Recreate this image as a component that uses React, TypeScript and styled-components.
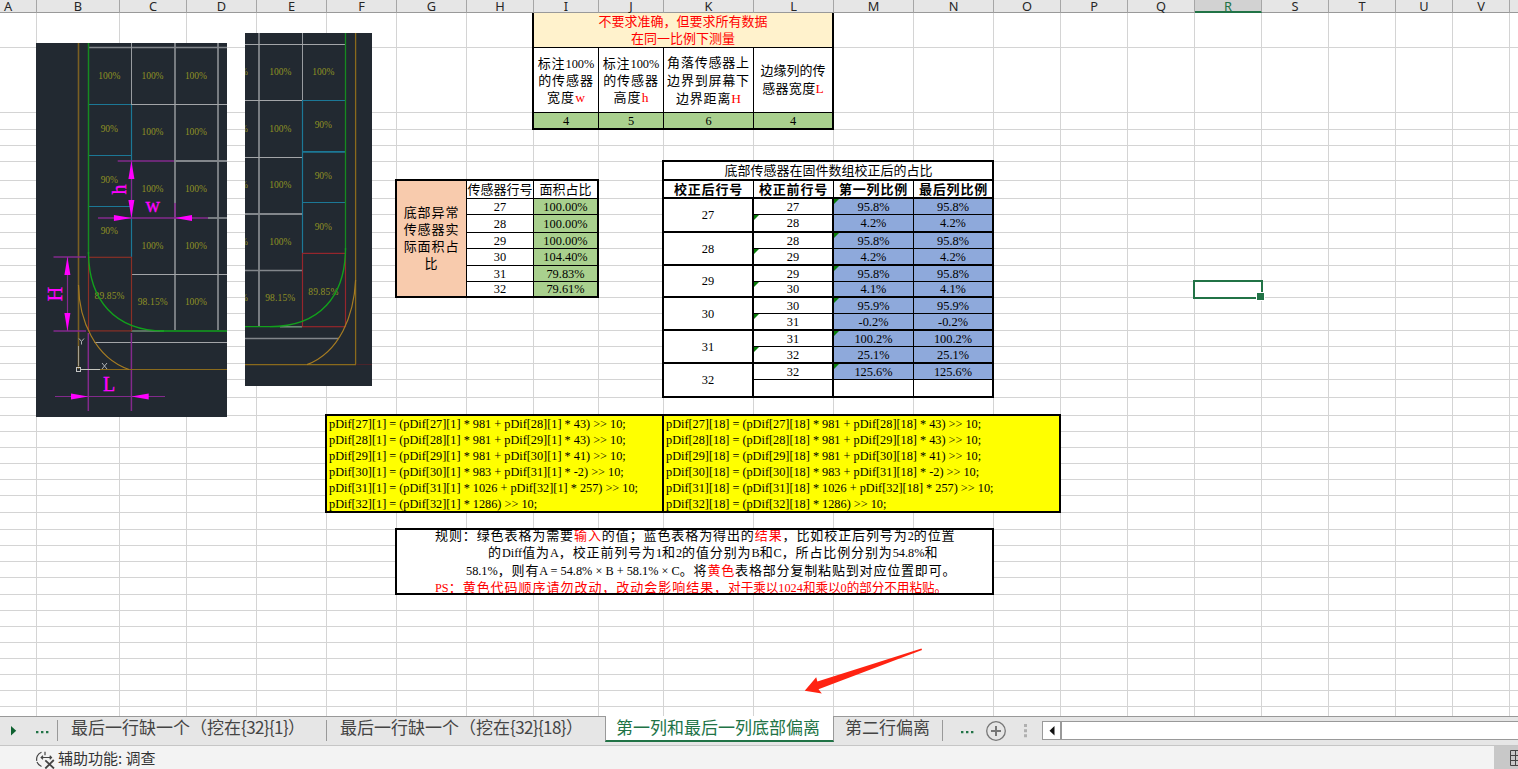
import React from "react";
import styled, { createGlobalStyle, css } from "styled-components";

const GREEN = "#217346";
const SERIF = `"Liberation Serif", "Noto Sans CJK SC", serif`;
const UI = `"Noto Sans CJK SC", "Open Sans", sans-serif`;

const COLS = [37, 83, 67, 70, 70, 70, 70, 67, 65, 65, 90, 80, 80, 80, 67, 67, 67, 67, 67, 67, 57, 57, 9];
const ROWS = [
  35, 65, 17, 16, 16, 19, 18, 16, 18, 16, 17, 16, 16, 16, 17, 16, 17, 16, 18, 18,
  16, 16, 16, 16, 16, 17, 17, 16, 16, 16, 17, 16, 16, 16, 16, 16, 16, 16, 9,
];
const NAMES = "ABCDEFGHIJKLMNOPQRSTUV".split("").concat("");
const TEMPLATE = COLS.map((w) => `${w}px`).join(" ");

const GlobalStyle = createGlobalStyle`
  body { margin: 0; background: #fff; overflow: hidden; }
  * { box-sizing: border-box; }
`;

const Window = styled.div`
  width: 1518px;
  height: 769px;
  display: flex;
  flex-direction: column;
  overflow: hidden;
  font-family: ${UI};
`;

/* ---------- column headings ---------- */
const Headings = styled.div`
  flex: none;
  height: 13px;
  display: grid;
  grid-template-columns: ${TEMPLATE};
  background: #e6e6e6;
`;

const Heading = styled.div<{ $selected: boolean; $first: boolean }>`
  height: 13px;
  border-right: 1px solid #a6a6a6;
  border-bottom: 1px solid #999;
  font: 12.8px/12px "Noto Sans", sans-serif;
  text-align: center;
  color: #262626;
  ${(p) => p.$first && css`padding-right: 20px;`}
  ${(p) =>
    p.$selected &&
    css`
      background: #d2d2d2;
      color: ${GREEN};
      border-bottom: 2px solid ${GREEN};
    `}
`;

/* ---------- sheet ---------- */
const Sheet = styled.div`
  flex: none;
  position: relative;
  height: 703px;
  display: grid;
  grid-template-columns: ${TEMPLATE};
  grid-template-rows: ${ROWS.map((h) => `${h}px`).join(" ")};
  overflow: hidden;
  background: #fff;
`;

const ColumnLine = styled.div<{ $c: number }>`
  grid-area: 1 / ${(p) => p.$c} / -1 / ${(p) => p.$c + 1};
  border-right: 1px solid #d4d4d4;
`;

const RowLine = styled.div<{ $r: number }>`
  grid-area: ${(p) => p.$r} / 1 / ${(p) => p.$r + 1} / -1;
  border-bottom: 1px solid #d4d4d4;
`;

interface Area {
  $r: number;
  $c: number;
  $rs?: number;
  $cs?: number;
}
const area = css<Area>`
  grid-area: ${(p) => p.$r} / ${(p) => p.$c} / span ${(p) => p.$rs ?? 1} / span ${(p) => p.$cs ?? 1};
`;

const Cell = styled.div<Area & { $bg?: string; $right?: number; $bottom?: number; $flag?: boolean; $lh?: number; $drop?: number }>`
  ${area}
  position: relative;
  min-width: 0;
  min-height: 0;
  display: flex;
  flex-direction: column;
  align-items: center;
  justify-content: center;
  border: 0 solid #000;
  border-right-width: ${(p) => p.$right ?? 1}px;
  border-bottom-width: ${(p) => p.$bottom ?? 1}px;
  padding-top: ${(p) => p.$drop ?? 0}px;
  background: ${(p) => p.$bg ?? "#fff"};
  font: 12.4px/${(p) => p.$lh ?? 14}px ${SERIF};
  white-space: pre;
  color: #000;
  ${(p) =>
    p.$flag &&
    css`
      &::before {
        content: "";
        position: absolute;
        left: 0;
        top: 0;
        border-top: 5px solid #0a7d0a;
        border-right: 5px solid transparent;
      }
    `}
`;

const Frame = styled.div<Area & { $openTop?: boolean }>`
  ${area}
  z-index: 1;
  margin: -2px 0 0 -2px;
  border: 2px solid #000;
  ${(p) => p.$openTop && css`border-top: 0; margin-top: 0;`}
`;

const Cjk = styled.span<{ $gap: number; $size: number; $bold?: boolean }>`
  font-size: ${(p) => p.$size}px;
  line-height: 0;
  letter-spacing: ${(p) => p.$gap}px;
  font-weight: ${(p) => (p.$bold ? 700 : 400)};
`;

const Red = styled.span`
  color: #f00;
`;

const Symbol = styled(Red)`
  font-size: 13.5px;
  line-height: 0;
`;

const CodeCell = styled.div<Area>`
  ${area}
  padding-left: 2px;
  background: #ff0;
  font: 12.28px/16px ${SERIF};
  white-space: pre;
  overflow: hidden;
`;

const RuleCell = styled.div<Area>`
  ${area}
  display: flex;
  flex-direction: column;
  justify-content: center;
  padding-top: 2px;
  background: #fff;
  border-bottom: 2px solid #000;
  overflow: hidden;
  font: 12.3px/17.4px ${SERIF};
  white-space: pre;
`;

const RuleLine = styled.div<{ $indent: number }>`
  flex: none;
  height: 17.4px;
  padding-left: ${(p) => p.$indent}px;
`;

const Selection = styled.div<Area>`
  ${area}
  position: relative;
  z-index: 1;
  margin: -2px -1px -1px -2px;
  border: 2px solid ${GREEN};
  &::after {
    content: "";
    position: absolute;
    right: -4px;
    bottom: -4px;
    width: 7px;
    height: 7px;
    background: ${GREEN};
    border: 1px solid #fff;
  }
`;

const Floating = styled.svg<{ $x: number; $y: number }>`
  position: absolute;
  left: ${(p) => p.$x}px;
  top: ${(p) => p.$y - 13}px;
  z-index: 2;
  display: block;
`;

/* Splits a string so that only the Chinese runs take the wider tracking. */
function Mixed({ t, gap = 0, size = 13, bold }: { t: string; gap?: number; size?: number; bold?: boolean }) {
  const runs = t.match(/[\u3000-\u9fff\uff00-\uffef]+|[^\u3000-\u9fff\uff00-\uffef]+/g) ?? [];
  return (
    <>
      {runs.map((run, i) =>
        /[\u3000-\u9fff\uff00-\uffef]/.test(run) ? (
          <Cjk key={i} $gap={gap} $size={size} $bold={bold}>{run}</Cjk>
        ) : (
          <React.Fragment key={i}>{run}</React.Fragment>
        ),
      )}
    </>
  );
}

/* ---------- drawings ---------- */
const WALL = "#222931";
const GREY = "#82868b";
const BLUE = "#1c7896";
const GOLD = "#8a6a1c";
const LIME = "#12a01c";
const BRICK = "#8a3026";
const PLUM = "#832a8c";
const PINK = "#ff00ff";

type Seg = [number, number, number, number, string, number?];

function Segments({ items }: { items: Seg[] }) {
  return (
    <>
      {items.map(([x1, y1, x2, y2, stroke, w = 1], i) => (
        <line key={i} x1={x1} y1={y1} x2={x2} y2={y2} stroke={stroke} strokeWidth={w} />
      ))}
    </>
  );
}

type Label = [number, number, string];

function Labels({ items }: { items: Label[] }) {
  return (
    <g fill="#8f9124" fontFamily="Liberation Serif, serif" fontSize="9.5" textAnchor="middle">
      {items.map(([x, y, t], i) => (
        <text key={i} x={x} y={y + 3.3} textLength={t.length === 6 ? 30 : t.length === 4 ? 22 : 17}>{t}</text>
      ))}
    </g>
  );
}

const LEFT_LINES: Seg[] = [
  [78.5, 43, 78.5, 369, "#7a5f22", 1.6],
  [88, 47.5, 227, 47.5, GREY, 1.6],
  [131.5, 43, 131.5, 104, "#999ca0"],
  [131.5, 104, 131.5, 257, BLUE, 1.2],
  [175, 43, 175, 330, GREY, 1.8],
  [218, 43, 218, 330, GREY, 1.8],
  [131, 104.5, 227, 104.5, "#a3a5a8"],
  [88, 104.5, 131, 104.5, BLUE],
  [88, 155.5, 131, 155.5, BLUE],
  [88, 206.5, 131, 206.5, BLUE],
  [174, 161, 227, 161, GREY, 1.8],
  [208, 218, 227, 218, GREY, 1.8],
  [131, 274.5, 227, 274.5, "#a3a5a8"],
  [94.5, 342.5, 227, 342.5, "#a3a5a8"],
  [131, 331, 164, 331, "#6d8a72", 1.6],
  [117.7, 161, 174, 161, PLUM, 1.6],
  [98, 218, 208, 218, PLUM, 1.6],
  [175, 203, 175, 218, PLUM, 1.6],
  [131.5, 161, 131.5, 218, PLUM, 1.2],
  [53.5, 257, 86, 257, PLUM, 1.6],
  [53.5, 331, 86, 331, PLUM, 1.6],
  [67.5, 257, 67.5, 331, PLUM, 1.2],
  [88.3, 333, 88.3, 411, PLUM, 1.5],
  [131.4, 333, 131.4, 411, PLUM, 1.5],
  [55, 396.5, 165, 396.5, PLUM, 1.2],
  [88.5, 43, 88.5, 254, "#168a20", 1.5],
  [160, 330.9, 227, 330.9, LIME, 1.5],
  [100, 369.5, 227, 369.5, GOLD, 1.2],
  [78.5, 346, 78.5, 366, "#a5a090"],
  [81, 369.5, 100, 369.5, "#c5c5bd"],
];

function LeftDrawing() {
  return (
    <Floating $x={36} $y={43} width={191} height={374} viewBox="36 43 191 374">
      <rect x="36" y="43" width="191" height="374" fill={WALL} />
      <Labels
        items={[
          [109.3, 75.5, "100%"], [152.5, 75.5, "100%"], [195.9, 75.5, "100%"],
          [109.3, 128.5, "90%"], [152.5, 132, "100%"], [195.9, 132, "100%"],
          [109.3, 179.2, "90%"], [152.5, 188.7, "100%"], [195.9, 188.7, "100%"],
          [109.3, 230.3, "90%"], [152.5, 245.3, "100%"], [195.9, 245.3, "100%"],
          [109.5, 296, "89.85%"], [152.7, 302, "98.15%"], [195.9, 302, "100%"],
        ]}
      />
      <Segments items={LEFT_LINES} />
      <rect x="88.5" y="257.3" width="43" height="73.6" fill="none" stroke={BRICK} strokeWidth="1.2" />
      <path d="M88.5 252C88.5 300 115 330.9 164 330.9" fill="none" stroke={LIME} strokeWidth="1.4" />
      <path d="M78.5 285C79 320 95 358 129 369.5" fill="none" stroke="#a67c22" strokeWidth="1.2" />
      <rect x="76.5" y="367.5" width="4" height="4" fill="none" stroke="#c5c5c5" />
      <path d="M79 338.5l2.5 3v3M84 338.5l-2.5 3M102 363l5 6M107 363l-5 6" fill="none" stroke="#b0b3b6" />
      <g fill={PINK}>
        <path d="M131.4 161l-3 18h6zM131.4 218l-3-18h6zM131.4 218l-17.5-3v6zM175 218l17-3v6z" />
        <path d="M67.4 257l-3 18h6zM67.4 331l-3-18h6zM88.3 396.5l-17.3-3v6zM131.4 396.5l17.3-3v6z" />
        <g fontFamily="Liberation Serif, serif" fontSize="20" textAnchor="middle" stroke={PINK} strokeWidth="0.3">
          <text x="152.7" y="212">w</text>
          <text x="109" y="391">L</text>
          <text transform="translate(125.5 189.6) rotate(-90)">h</text>
          <text transform="translate(62 294) rotate(-90)">H</text>
        </g>
      </g>
    </Floating>
  );
}

const RIGHT_LINES: Seg[] = [
  [355.6, 33, 355.6, 364, GOLD, 1.3],
  [259, 33, 259, 326, GREY, 1.8],
  [302.5, 33, 302.5, 100, "#999ca0"],
  [302.5, 100, 302.5, 253, BLUE, 1.2],
  [245, 44.5, 345, 44.5, "#a3a5a8"],
  [245, 100.5, 302, 100.5, "#a3a5a8"],
  [302, 100.5, 345, 100.5, BLUE],
  [302, 151.8, 345, 151.8, BLUE, 1.8],
  [302, 202.5, 345, 202.5, BLUE],
  [245, 157.5, 302, 157.5, "#a3a5a8"],
  [245, 214, 302, 214, GREY, 1.8],
  [245, 270.4, 302, 270.4, GREY, 1.5],
  [280, 326.8, 302, 326.8, "#6d8a72", 1.6],
  [245, 338.4, 339, 338.4, GREY, 1.5],
  [245, 326.6, 280, 326.6, LIME, 1.4],
  [345.5, 33, 345.5, 250, "#168a20", 1.3],
  [245, 364.6, 356, 364.6, GOLD, 1.4],
  [356, 364.5, 372, 364.5, "#4a242b"],
];

function RightDrawing() {
  const rows = [71.7, 128.2, 184.8, 241.2];
  return (
    <Floating $x={245} $y={33} width={127} height={353} viewBox="245 33 127 353">
      <rect x="245" y="33" width="127" height="353" fill={WALL} />
      <Labels
        items={[
          ...rows.map((y): Label => [280.3, y, "100%"]),
          ...rows.concat(298).map((y): Label => [237, y, "100%"]),
          [323.3, 71.7, "100%"], [323.3, 124.5, "90%"], [323.3, 175.3, "90%"], [323.3, 226.2, "90%"],
          [280.2, 298, "98.15%"], [323.3, 291.5, "89.85%"],
        ]}
      />
      <Segments items={RIGHT_LINES} />
      <rect x="302.5" y="253.4" width="43" height="73.3" fill="none" stroke="#96262c" strokeWidth="1.2" />
      <path d="M345.5 248C345.5 296 320 326.6 270 326.6" fill="none" stroke={LIME} strokeWidth="1.4" />
      <path d="M355.6 280C354 315 340 352 307 364.6" fill="none" stroke="#a67c22" strokeWidth="1.2" />
    </Floating>
  );
}

function Pointer() {
  return (
    <Floating $x={800} $y={644} width={126} height={54} viewBox="800 644 126 54">
      <path d="M804.7 690.7L816.2 677.2L817.4 681.4L921.5 648.6L922 650L818.5 689.2L821.8 693.4Z" fill="#ff2312" />
    </Floating>
  );
}

/* ---------- tab strip and status bar ---------- */
const TabStrip = styled.div`
  flex: none;
  height: 30px;
  display: flex;
  align-items: flex-start;
  background: #e6e6e6;
  border-bottom: 1px solid #c6c6c6;
`;

const Part = styled.div<{ $w?: number }>`
  flex: ${(p) => (p.$w ? "none" : "1")};
  width: ${(p) => (p.$w ? `${p.$w}px` : "auto")};
  height: 29px;
  display: flex;
  align-items: center;
  border-top: 1px solid #999;
`;

const Tab = styled.div<{ $w: number; $pad: number; $active?: boolean; $rule?: boolean }>`
  flex: none;
  position: relative;
  width: ${(p) => p.$w}px;
  height: 29px;
  padding-left: ${(p) => p.$pad}px;
  border-top: 1px solid #999;
  font-size: 17px;
  line-height: 20px;
  white-space: nowrap;
  color: #444;
  ${(p) =>
    p.$rule &&
    css`
      &::after {
        content: "";
        position: absolute;
        right: 0;
        top: 3px;
        width: 1px;
        height: 21px;
        background: #999;
      }
    `}
  ${(p) =>
    p.$active &&
    css`
      height: 26px;
      color: ${GREEN};
      background: #fff;
      border: 0 solid #999;
      border-width: 0 1px;
      border-bottom: 2px solid ${GREEN};
      line-height: 21px;
    `}
`;

const Braces = styled.span`
  letter-spacing: -0.6px;
`;

const ScrollBar = styled.div`
  flex: 1;
  height: 19px;
  display: flex;
  margin: 0 0 1px 14px;
  border: 1px solid #999;
  border-right: 0;
  background: #fff;
`;

const ScrollButton = styled.div`
  width: 19px;
  height: 17px;
  border-right: 2px solid #999;
  display: flex;
  align-items: center;
  justify-content: center;
`;

const StatusBar = styled.div`
  flex: 1;
  display: flex;
  align-items: center;
  background: #f3f3f3;
  color: #333;
  font-size: 15px;
  line-height: 20px;
  white-space: pre;
`;

const StatusText = styled.span`
  flex: 1;
  padding-top: 1px;
`;

const ViewButton = styled.div`
  align-self: stretch;
  width: 24px;
  background: #c8c8c8;
  display: flex;
  align-items: center;
  justify-content: flex-end;
`;

/* ---------- data ---------- */
const AREA_ROWS = [
  ["27", "100.00%"], ["28", "100.00%"], ["29", "100.00%"],
  ["30", "104.40%"], ["31", "79.83%"], ["32", "79.61%"],
];

const RATIO_ROWS = [
  ["27", "95.8%"], ["28", "4.2%"], ["28", "95.8%"], ["29", "4.2%"],
  ["29", "95.8%"], ["30", "4.1%"], ["30", "95.9%"], ["31", "-0.2%"],
  ["31", "100.2%"], ["32", "25.1%"], ["32", "125.6%"], ["", ""],
];

const CODE: [number, number, string][] = [
  [27, 28, "981"], [28, 29, "981"], [29, 30, "981"], [30, 31, "983"], [31, 32, "1026"], [32, 0, "1286"],
];
const TAIL = ["43", "43", "41", "-2", "257", ""];

function codeFor(col: number) {
  return CODE.map(([a, b, k], i) => {
    const head = `pDif[${a}][${col}] = (pDif[${a}][${col}] * ${k}`;
    return b ? `${head} + pDif[${b}][${col}] * ${TAIL[i]}) >> 10;` : `${head}) >> 10;`;
  }).join("\n");
}

const LIGHT_GREEN = "#a9d08e";
const LIGHT_BLUE = "#8ea9db";

function MeasureTable() {
  return (
    <>
      <Cell $r={1} $c={9} $cs={4} $bg="#fff2cc" $lh={17} $right={2} $drop={1}>
        <Red><Mixed t="不要求准确，但要求所有数据" /></Red>
        <Red><Mixed t="在同一比例下测量" /></Red>
      </Cell>
      <Cell $r={2} $c={9} $lh={17} $drop={2}>
        <span><Mixed t="标注100%" gap={0.9} /></span>
        <span><Mixed t="的传感器" gap={0.9} /></span>
        <span><Mixed t="宽度" gap={1} /><Symbol>w</Symbol></span>
      </Cell>
      <Cell $r={2} $c={10} $lh={17} $drop={2}>
        <span><Mixed t="标注100%" gap={0.9} /></span>
        <span><Mixed t="的传感器" gap={0.9} /></span>
        <span><Mixed t="高度" gap={1} /><Symbol>h</Symbol></span>
      </Cell>
      <Cell $r={2} $c={11} $lh={18} $drop={1}>
        <span><Mixed t="角落传感器上" gap={0.8} /></span>
        <span><Mixed t="边界到屏幕下" gap={0.8} /></span>
        <span><Mixed t="边界距离" gap={0.8} /><Symbol>H</Symbol></span>
      </Cell>
      <Cell $r={2} $c={12} $lh={18} $right={2}>
        <span><Mixed t="边缘列的传" /></span>
        <span><Mixed t="感器宽度" gap={0.3} /><Symbol>L</Symbol></span>
      </Cell>
      {["4", "5", "6", "4"].map((v, i) => (
        <Cell key={i} $r={3} $c={9 + i} $bg={LIGHT_GREEN} $right={i === 3 ? 2 : 1} $bottom={2} $drop={1}>{v}</Cell>
      ))}
      <Frame $r={1} $c={9} $rs={3} $cs={4} $openTop />
    </>
  );
}

function AreaTable() {
  return (
    <>
      <Cell $r={7} $c={7} $rs={7} $bg="#f8cbad" $lh={17} $bottom={2}>
        {["底部异常", "传感器实", "际面积占", "比"].map((t) => (
          <span key={t}><Mixed t={t} gap={0.9} /></span>
        ))}
      </Cell>
      <Cell $r={7} $c={8} $drop={1}><span><Mixed t="传感器行号" /></span></Cell>
      <Cell $r={7} $c={9} $right={2} $drop={1}><span><Mixed t="面积占比" /></span></Cell>
      {AREA_ROWS.map(([n, v], i) => (
        <React.Fragment key={n}>
          <Cell $r={8 + i} $c={8} $bottom={i === 5 ? 2 : 1}>{n}</Cell>
          <Cell $r={8 + i} $c={9} $bg={LIGHT_GREEN} $right={2} $bottom={i === 5 ? 2 : 1}>{v}</Cell>
        </React.Fragment>
      ))}
      <Frame $r={7} $c={7} $rs={7} $cs={3} />
    </>
  );
}

function RatioTable() {
  return (
    <>
      <Cell $r={6} $c={11} $cs={4} $bottom={2} $drop={1}><span><Mixed t="底部传感器在固件数组校正后的占比" /></span></Cell>
      {["校正后行号", "校正前行号", "第一列比例", "最后列比例"].map((t, i) => (
        <Cell key={t} $r={7} $c={11 + i} $bottom={2} $drop={1}><span><Mixed t={t} gap={0.8} bold /></span></Cell>
      ))}
      {[27, 28, 29, 30, 31, 32].map((n, i) => (
        <Cell key={n} $r={8 + i * 2} $c={11} $rs={2} $right={2} $bottom={2}>{n}</Cell>
      ))}
      {RATIO_ROWS.map(([n, v], i) => {
        const bottom = i % 2 ? 2 : 1;
        const bg = v ? LIGHT_BLUE : "#fff";
        return (
          <React.Fragment key={i}>
            <Cell $r={8 + i} $c={12} $right={2} $bottom={bottom} $flag={i % 2 === 1 && !!n}>{n}</Cell>
            <Cell $r={8 + i} $c={13} $bg={bg} $bottom={bottom} $flag={i % 2 === 0}>{v}</Cell>
            <Cell $r={8 + i} $c={14} $bg={bg} $right={2} $bottom={bottom}>{v}</Cell>
          </React.Fragment>
        );
      })}
      <Frame $r={6} $c={11} $rs={14} $cs={4} />
    </>
  );
}

function Rules() {
  return (
    <>
      <RuleCell $r={28} $c={7} $rs={4} $cs={8}>
        <RuleLine $indent={38}>
          <Mixed t="规则：绿色表格为需要" gap={0.9} /><Red><Mixed t="输入" gap={0.9} /></Red>
          <Mixed t="的值；蓝色表格为得出的" gap={0.9} /><Red><Mixed t="结果" gap={0.9} /></Red>
          <Mixed t="，比如校正后列号为2的位置" gap={0.9} />
        </RuleLine>
        <RuleLine $indent={91}>
          <Mixed t="的Diff值为A，校正前列号为1和2的值分别为B和C，所占比例分别为54.8%和" gap={0.87} />
        </RuleLine>
        <RuleLine $indent={69}>
          <Mixed t="58.1%，则有A = 54.8% × B + 58.1% × C。将" gap={0.83} /><Red><Mixed t="黄色" gap={0.83} /></Red>
          <Mixed t="表格部分复制粘贴到对应位置即可。" gap={0.83} />
        </RuleLine>
        <RuleLine $indent={38}>
          <Red>
            <Mixed t="PS：黄色代码顺序请勿改动，改动会影响结果，" gap={0.97} />
            <Mixed t="对于乘以1024和乘以0的部分不用粘贴。" size={12.6} gap={-0.05} />
          </Red>
        </RuleLine>
      </RuleCell>
      <Frame $r={28} $c={7} $rs={4} $cs={8} />
    </>
  );
}

function Strip() {
  return (
    <TabStrip>
      <Part $w={57}>
        <svg width="57" height="28" viewBox="0 717 57 28">
          <path d="M11 726v9.5l5.2-4.75z" fill="#0e6130" />
          <path d="M36 731h2.4v2.2H36zM41 731h2.4v2.2H41zM46 731h2.4v2.2H46z" fill={GREEN} />
        </svg>
      </Part>
      <Tab $w={1} $pad={0} $rule />
      <Tab $w={269} $pad={13} $rule>最后一行缺一个（挖在<Braces>{"{32}{1}"}</Braces>）</Tab>
      <Tab $w={278} $pad={13}>最后一行缺一个（挖在<Braces>{"{32}{18}"}</Braces>）</Tab>
      <Tab $w={229} $pad={10} $active>第一列和最后一列底部偏离</Tab>
      <Tab $w={109} $pad={11} $rule>第二行偏离</Tab>
      <Part>
        <svg width="85" height="28" viewBox="943 717 85 28">
          <path d="M961 731h2.4v2.2H961zM966 731h2.4v2.2H966zM971 731h2.4v2.2H971z" fill={GREEN} />
          <circle cx="996" cy="731" r="9.3" fill="none" stroke="#777" strokeWidth="1.3" />
          <path d="M991 731h10M996 726v10" stroke="#777" strokeWidth="2" />
          <path d="M1024 724h3v3h-3zM1024 729.3h3v3h-3zM1024 734.3h3v3h-3z" fill="#b0b0b0" />
        </svg>
        <ScrollBar>
          <ScrollButton>
            <svg width="6" height="10" viewBox="0 0 6 10"><path d="M5.5 0v9.6L0.5 4.8z" fill="#111" /></svg>
          </ScrollButton>
        </ScrollBar>
      </Part>
    </TabStrip>
  );
}

function Status() {
  return (
    <StatusBar>
      <svg width="58" height="23" viewBox="0 746 58 23">
        <g fill="none" stroke="#444" strokeWidth="1.2">
          <path d="M41.5 752.3C35 754.5 35 764 41.5 766.5" strokeDasharray="10.5 1.2" />
          <path d="M41 757.5h10.5M43 755.8l-1.8 1.7 1.8 1.7M49.7 755.8l1.8 1.7-1.8 1.7M45 751.8v3.5" />
          <path d="M45.3 760.3l8.7 8.2M53.8 760l-8.5 8.5" strokeWidth="1.8" />
        </g>
      </svg>
      <StatusText>辅助功能: 调查</StatusText>
      <ViewButton>
        <svg width="8" height="16" viewBox="0 0 8 16">
          <path d="M8 .5H.5v15H8M.5 5.5H8M.5 10.5H8M5.5 0v16" fill="none" stroke="#444" />
        </svg>
      </ViewButton>
    </StatusBar>
  );
}

export default function App() {
  return (
    <Window>
      <GlobalStyle />
      <Headings>
        {NAMES.map((n, i) => (
          <Heading key={i} $selected={n === "R"} $first={i === 0}>{n}</Heading>
        ))}
      </Headings>
      <Sheet>
        {COLS.slice(0, -1).map((_, i) => <ColumnLine key={i} $c={i + 1} />)}
        {ROWS.slice(0, -1).map((_, i) => <RowLine key={i} $r={i + 1} />)}
        <MeasureTable />
        <AreaTable />
        <RatioTable />
        <CodeCell $r={21} $c={6} $rs={6} $cs={5}>{codeFor(1)}</CodeCell>
        <CodeCell $r={21} $c={11} $rs={6} $cs={5}>{codeFor(18)}</CodeCell>
        <Frame $r={21} $c={6} $rs={6} $cs={5} />
        <Frame $r={21} $c={11} $rs={6} $cs={5} />
        <Rules />
        <Selection $r={13} $c={18} />
        <LeftDrawing />
        <RightDrawing />
        <Pointer />
      </Sheet>
      <Strip />
      <Status />
    </Window>
  );
}
